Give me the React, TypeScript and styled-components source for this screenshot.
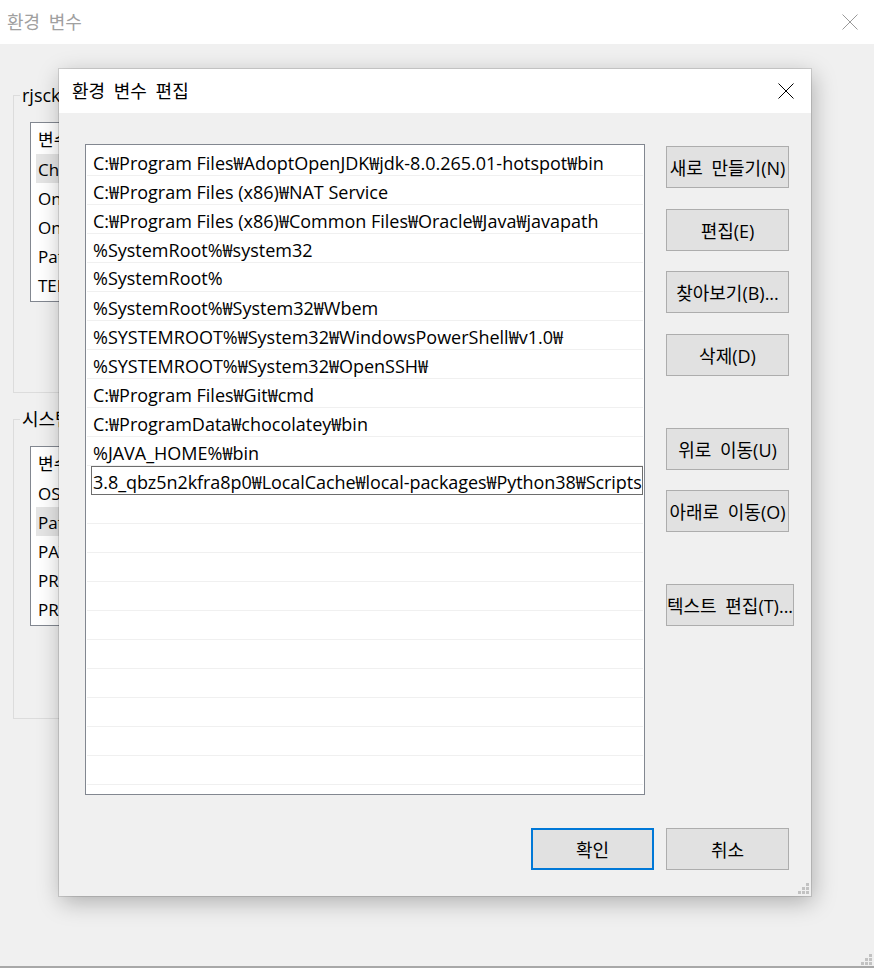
import React from "react";
import styled, { createGlobalStyle } from "styled-components";

const GlobalStyle = createGlobalStyle`
  html, body { margin: 0; padding: 0; }
  body {
    width: 874px;
    height: 968px;
    overflow: hidden;
    background: #f0f0f0;
    font-family: "Open Sans", "Noto Sans CJK KR", sans-serif;
    color: #000;
  }
  * { box-sizing: border-box; }
`;

const KR = `"Open Sans", "Noto Sans CJK KR", sans-serif`;

const Screen = styled.div`
  position: relative;
  width: 874px;
  height: 968px;
  background: #f0f0f0;
  display: flex;
  flex-direction: column;
  overflow: hidden;
`;

const TitleBar = styled.div<{ $inactive?: boolean }>`
  height: 44px;
  flex: none;
  background: #fff;
  display: flex;
  align-items: center;
  justify-content: space-between;
  padding: 0 ${(p) => (p.$inactive ? "16px" : "17px")} 0 ${(p) => (p.$inactive ? "7px" : "13px")};
`;

const Title = styled.span<{ $inactive?: boolean }>`
  font-family: ${KR};
  font-size: 18px;
  line-height: 24px;
  word-spacing: 4px;
  color: ${(p) => (p.$inactive ? "#a0a0a0" : "#000")};
`;

const BackBody = styled.div`
  flex: 1;
  display: flex;
  flex-direction: column;
  gap: 14px;
  padding: 39px 0 0 13px;
`;

const Group = styled.fieldset<{ $h: number }>`
  margin: 0;
  width: 780px;
  height: ${(p) => p.$h}px;
  border: 1px solid #dcdcdc;
  padding: 15px 0 0 0;
`;

const Legend = styled.legend`
  font-family: ${KR};
  font-size: 18px;
  line-height: 24px;
  padding: 0 2px;
  margin-left: 6px;
  white-space: nowrap;
  color: #000;
`;

const BackList = styled.div`
  width: 700px;
  margin-left: 16px;
  border: 1px solid #828790;
  background: #fff;
  padding: 0 0 2px 5px;
  display: flex;
  flex-direction: column;
`;

const BackHeader = styled.div`
  height: 31px;
  display: flex;
  align-items: center;
  padding-left: 2px;
  font-family: ${KR};
  font-size: 17px;
`;

const BackRow = styled.div<{ $sel?: boolean }>`
  height: 29px;
  display: flex;
  align-items: center;
  padding: 2px 0 0 2px;
  font-size: 17px;
  background: ${(p) => (p.$sel ? "#e5e5e5" : "transparent")};
  white-space: nowrap;
`;

const BottomEdge = styled.div`
  position: absolute;
  left: 0;
  right: 0;
  bottom: 0;
  height: 2px;
  background: #a8a8a8;
`;

const CornerGrip = styled.div`
  position: absolute;
  right: 2px;
  bottom: 3px;
  width: 11px;
  height: 11px;
  display: flex;
`;

/* ---------- front dialog ---------- */

const Dialog = styled.div`
  position: absolute;
  left: 59px;
  top: 69px;
  width: 752px;
  height: 827px;
  background: #f0f0f0;
  box-shadow: 0 0 0 1px rgba(0, 0, 0, 0.12), 2px 6px 22px rgba(0, 0, 0, 0.28);
  display: flex;
  flex-direction: column;
`;

const DialogBody = styled.div`
  position: relative;
  flex: 1;
  display: flex;
  flex-direction: column;
  padding: 31px 22px 0 26px;
`;

const Main = styled.div`
  display: grid;
  grid-template-columns: 560px auto;
  column-gap: 21px;
  align-items: start;
`;

const PathList = styled.div`
  height: 651px;
  border: 1px solid #828790;
  background: #fff;
  padding: 2px 1px;
  display: flex;
  flex-direction: column;
  overflow: hidden;
`;

const PathRow = styled.div`
  height: 29px;
  flex: none;
  border-bottom: 1px solid #f0f0f0;
  display: flex;
  align-items: center;
  padding: 1px 0 0 6px;
  font-size: 18px;
  white-space: nowrap;
  overflow: hidden;
`;

const EditRow = styled.div`
  height: 29px;
  flex: none;
  margin-left: 4px;
  border: 1px solid #6d6d6d;
  display: flex;
  align-items: center;
  padding: 1px 0 0 1px;
  font-size: 18px;
  letter-spacing: -0.06px;
  white-space: nowrap;
  overflow: hidden;
`;

const Buttons = styled.div`
  display: flex;
  flex-direction: column;
  align-items: flex-start;
  padding-top: 2px;
`;

const Btn = styled.button<{ $w?: number; $gap?: number; $primary?: boolean }>`
  width: ${(p) => p.$w ?? 123}px;
  height: 42px;
  margin-top: ${(p) => p.$gap ?? 0}px;
  padding: 0;
  background: #e1e1e1;
  border: ${(p) => (p.$primary ? "2px solid #0078d7" : "1px solid #adadad")};
  border-radius: 0;
  font-family: ${KR};
  font-size: 18px;
  word-spacing: 4px;
  color: #000;
  white-space: nowrap;
  display: flex;
  align-items: center;
  justify-content: center;
`;

const Footer = styled.div`
  display: flex;
  justify-content: flex-end;
  gap: 12px;
  margin-top: 33px;
`;

const Grip = styled.div`
  position: absolute;
  right: 2px;
  bottom: 2px;
  width: 11px;
  height: 11px;
  display: flex;
`;

const CloseIcon: React.FC<{ color: string }> = ({ color }) => (
  <svg width="16" height="16" viewBox="0 0 16 16">
    <path d="M0.5 0.5 L15.5 15.5 M15.5 0.5 L0.5 15.5" stroke={color} strokeWidth="1" fill="none" />
  </svg>
);

const GripIcon: React.FC = () => (
  <svg width="11" height="11" viewBox="0 0 11 11">
    {[
      [8, 0],
      [4, 4],
      [8, 4],
      [0, 8],
      [4, 8],
      [8, 8],
    ].map(([x, y], i) => (
      <rect key={i} x={x} y={y} width="3" height="3" fill="#c2c2c2" />
    ))}
  </svg>
);

const paths = [
  "C:₩Program Files₩AdoptOpenJDK₩jdk-8.0.265.01-hotspot₩bin",
  "C:₩Program Files (x86)₩NAT Service",
  "C:₩Program Files (x86)₩Common Files₩Oracle₩Java₩javapath",
  "%SystemRoot%₩system32",
  "%SystemRoot%",
  "%SystemRoot%₩System32₩Wbem",
  "%SYSTEMROOT%₩System32₩WindowsPowerShell₩v1.0₩",
  "%SYSTEMROOT%₩System32₩OpenSSH₩",
  "C:₩Program Files₩Git₩cmd",
  "C:₩ProgramData₩chocolatey₩bin",
  "%JAVA_HOME%₩bin",
];

const userVars = ["ChocolateyLastPathUpdate", "OneDrive", "OneDriveConsumer", "Path", "TEMP"];
const sysVars = ["OS", "Path", "PATHEXT", "PROCESSOR_ARCHITECTURE", "PROCESSOR_IDENTIFIER"];

export default function App() {
  return (
    <>
      <GlobalStyle />
      <Screen>
        <TitleBar $inactive>
          <Title $inactive>환경 변수</Title>
          <CloseIcon color="#9a9a9a" />
        </TitleBar>
        <BackBody>
          <Group $h={310}>
            <Legend>rjsck에 대한 사용자 변수(U)</Legend>
            <BackList>
              <BackHeader>변수</BackHeader>
              {userVars.map((v, i) => (
                <BackRow key={v} $sel={i === 0}>
                  {v}
                </BackRow>
              ))}
            </BackList>
          </Group>
          <Group $h={312}>
            <Legend>시스템 변수(S)</Legend>
            <BackList>
              <BackHeader>변수</BackHeader>
              {sysVars.map((v, i) => (
                <BackRow key={v} $sel={i === 1}>
                  {v}
                </BackRow>
              ))}
            </BackList>
          </Group>
        </BackBody>
        <BottomEdge />
        <CornerGrip>
          <GripIcon />
        </CornerGrip>

        <Dialog>
          <TitleBar>
            <Title>환경 변수 편집</Title>
            <CloseIcon color="#000" />
          </TitleBar>
          <DialogBody>
            <Main>
              <PathList>
                {paths.map((p) => (
                  <PathRow key={p}>{p}</PathRow>
                ))}
                <EditRow>3.8_qbz5n2kfra8p0₩LocalCache₩local-packages₩Python38₩Scripts</EditRow>
                {Array.from({ length: 10 }).map((_, i) => (
                  <PathRow key={"e" + i} />
                ))}
              </PathList>
              <Buttons>
                <Btn>새로 만들기(N)</Btn>
                <Btn $gap={21}>편집(E)</Btn>
                <Btn $gap={20}>찾아보기(B)...</Btn>
                <Btn $gap={21}>삭제(D)</Btn>
                <Btn $gap={52}>위로 이동(U)</Btn>
                <Btn $gap={20}>아래로 이동(O)</Btn>
                <Btn $gap={52} $w={128}>
                  텍스트 편집(T)...
                </Btn>
              </Buttons>
            </Main>
            <Footer>
              <Btn $primary>확인</Btn>
              <Btn>취소</Btn>
            </Footer>
            <Grip>
              <GripIcon />
            </Grip>
          </DialogBody>
        </Dialog>
      </Screen>
    </>
  );
}
